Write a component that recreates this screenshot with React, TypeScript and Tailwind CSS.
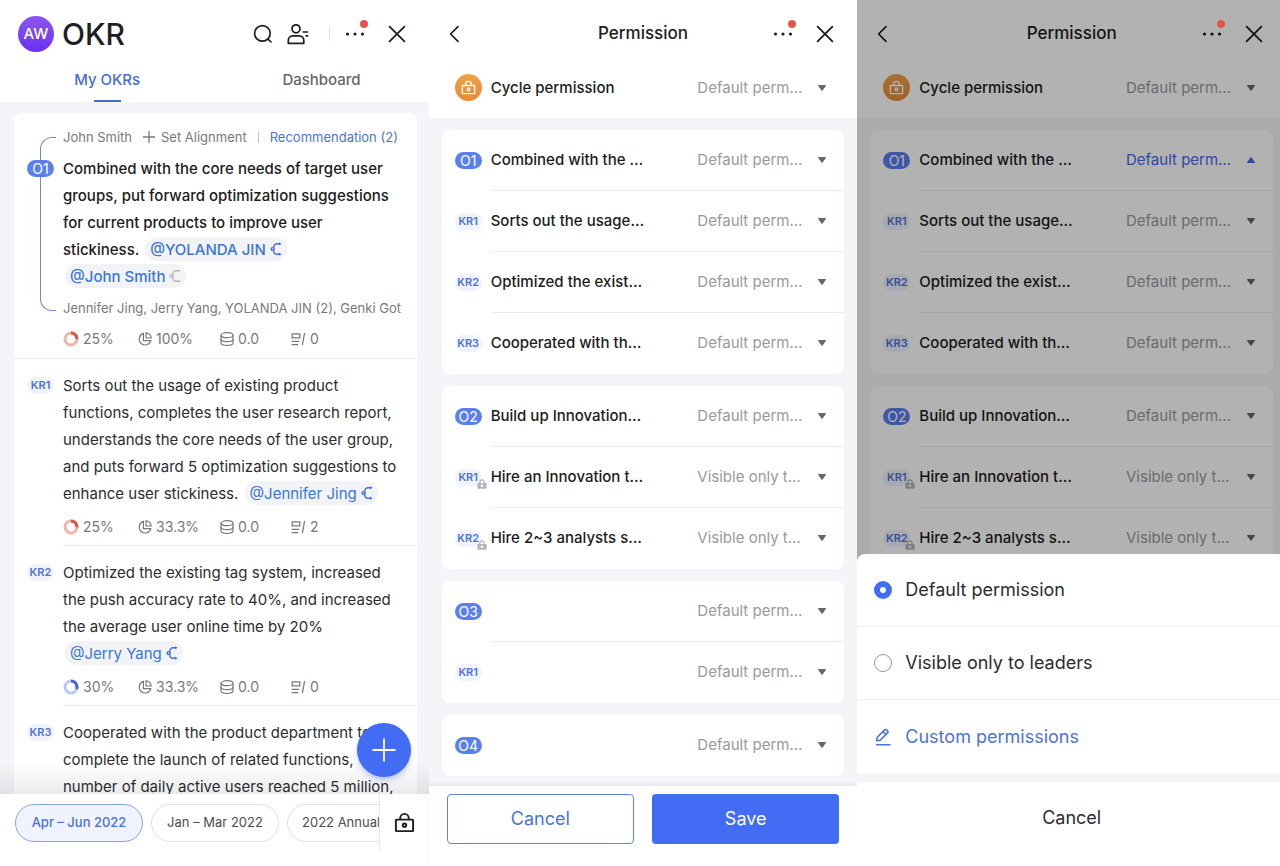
import { useState, type ReactNode } from "react";

type Progress = "red" | "blue";

function CloseIcon() {
  return (
    <svg width="20" height="20" viewBox="0 0 20 20" fill="none" stroke="currentColor" strokeWidth="1.8" strokeLinecap="round">
      <path d="M2.600 2.600l14.800 14.800M17.400 2.600L2.600 17.400" />
    </svg>
  );
}

function MoreIcon() {
  return (
    <svg width="20" height="6" viewBox="0 0 20 6" fill="currentColor">
      <circle cx="2.5" cy="3" r="1.6" />
      <circle cx="10" cy="3" r="1.6" />
      <circle cx="17.5" cy="3" r="1.6" />
    </svg>
  );
}

function SearchIcon() {
  return (
    <svg width="22" height="22" viewBox="0 0 22 22" fill="none" stroke="currentColor" strokeWidth="1.7" strokeLinecap="round">
      <circle cx="10.4" cy="10.4" r="7.8" />
      <path d="M16.2 16.4l2.800 2.600" />
    </svg>
  );
}

function ContactIcon() {
  return (
    <svg width="24" height="22" viewBox="0 0 24 22" fill="none" stroke="currentColor" strokeWidth="1.7">
      <circle cx="10" cy="5.800" r="4" />
      <path d="M2.300 20v-2.600a4.600 4.600 0 0 1 4.600-4.600h6.300a4.600 4.600 0 0 1 4.600 4.600V20a.4.4 0 0 1-.4.4H2.700a.4.4 0 0 1-.4-.4z" />
      <path d="M16.600 9h5.600M19.600 12.800h2.600" />
    </svg>
  );
}

function BackIcon() {
  return (
    <svg width="12" height="18" viewBox="0 0 12 18" fill="none" stroke="currentColor" strokeWidth="1.7" strokeLinecap="round" strokeLinejoin="round">
      <path d="M10 1.600L2.600 9l7.400 7.400" />
    </svg>
  );
}

function LockIcon({ size }: { size: number }) {
  return (
    <svg width={size} height={size} viewBox="0 0 22 22" fill="none" stroke="currentColor" strokeWidth="2">
      <rect x="2" y="8" width="18" height="12" rx="0.6" />
      <path d="M6.6 8V6.4a4.4 4.4 0 0 1 8.8 0V8" />
      <circle cx="11" cy="13.8" r="1.8" />
    </svg>
  );
}

function SmallLockIcon() {
  return (
    <svg width="10" height="10" viewBox="0 0 10 10">
      <path d="M2.9 4.4V3a2.1 2.1 0 0 1 4.2 0v1.4" fill="none" stroke="#b4b6ba" strokeWidth="1.2" />
      <rect x="0.4" y="3.9" width="9.2" height="5.8" rx="0.8" fill="#b4b6ba" />
      <circle cx="5" cy="6.8" r="1.2" fill="#fff" />
    </svg>
  );
}

function AlignIcon({ muted }: { muted?: boolean }) {
  return (
    <svg width="12" height="14" viewBox="0 0 12 14" fill="none" stroke={muted ? "#b9bcc2" : "#4a6fdc"} strokeWidth="1.4">
      <path d="M9.400 1.800H7a3.200 3.200 0 0 0-3.200 3.200v4A3.200 3.200 0 0 0 7 12.200h2.400" />
      <circle cx="2.500" cy="7" r="1.400" fill="#f2f3f5" />
      <path d="M9 .2l2.600 1.600L9 3.400zM9 10.600l2.600 1.600L9 13.800z" fill={muted ? "#b9bcc2" : "#4a6fdc"} stroke="none" />
    </svg>
  );
}

function RingIcon({ tone, percent }: { tone: Progress; percent: number }) {
  const length = 2 * Math.PI * 6;
  return (
    <svg width="16" height="16" viewBox="0 0 16 16" fill="none" strokeWidth="3">
      <circle cx="8" cy="8" r="6" stroke={tone === "red" ? "#f0b5ad" : "#b9c8fa"} />
      <circle
        cx="8"
        cy="8"
        r="6"
        stroke={tone === "red" ? "#d65648" : "#4463dc"}
        strokeDasharray={`${(length * percent) / 100} ${length}`}
        transform="rotate(-90 8 8)"
      />
    </svg>
  );
}

function PieIcon() {
  return (
    <svg width="14" height="14" viewBox="0 0 14 14" fill="none" stroke="currentColor" strokeWidth="1.2">
      <path d="M5.4 1.4A5.9 5.9 0 1 0 12.8 8.6H5.4z" />
      <path d="M8 .8v5.2h5.2A5.3 5.3 0 0 0 8 .8z" />
    </svg>
  );
}

function CoinsIcon() {
  return (
    <svg width="14" height="14" viewBox="0 0 14 14" fill="none" stroke="currentColor" strokeWidth="1.2">
      <ellipse cx="7" cy="3.2" rx="6" ry="2.5" />
      <path d="M1 3.2v7.5c0 1.4 2.7 2.6 6 2.6s6-1.2 6-2.6V3.2" />
      <path d="M1 7c0 1.4 2.7 2.6 6 2.6S13 8.400 13 7" />
    </svg>
  );
}

function NoteIcon() {
  return (
    <svg width="15" height="14" viewBox="0 0 15 14" fill="none" stroke="currentColor" strokeWidth="1.3">
      <path d="M1.2 1.800h7.600v4H1.200zM.6 9.300h7.600M.6 12.600h6.600M13.600 1l-2.200 12" />
    </svg>
  );
}

function EditIcon() {
  return (
    <svg width="18" height="18" viewBox="0 0 18 18" fill="none" stroke="currentColor" strokeWidth="1.6" strokeLinejoin="round">
      <path d="M2.600 12.800l.7-3.600L10.600 1.900a1.300 1.300 0 0 1 1.800 0l1.200 1.200a1.300 1.300 0 0 1 0 1.800L6.200 12.200z" />
      <path d="M9 3.600l2.900 2.900M2 16.700h14.500" />
    </svg>
  );
}

function MoreButton() {
  return (
    <button type="button" aria-label="More" className="relative flex h-8 w-8 items-center justify-center">
      <MoreIcon />
      <span className="absolute top-[2px] right-[3px] z-20 size-2 rounded-full bg-[#e15549]" />
    </button>
  );
}

function Badge({ label, locked }: { label: string; locked?: boolean }) {
  const objective = label.startsWith("O");
  return (
    <span className="relative flex w-[27px] shrink-0 items-center">
      {objective ? (
        <span className="flex h-[17px] w-full items-center justify-center rounded-full bg-[#5a7ff0] text-sm text-white">{label}</span>
      ) : (
        <span className="flex h-[17px] w-full items-center justify-center rounded-full bg-[#f0f3fd] text-[11px] font-semibold text-[#4d73d9]">{label}</span>
      )}
      {locked && (
        <span className="absolute -right-[5px] -bottom-[3px]">
          <SmallLockIcon />
        </span>
      )}
    </span>
  );
}

function Mention({ name, muted }: { name: string; muted?: boolean }) {
  return (
    <a href="#mention" className="mx-[2px] my-px inline-flex h-6 items-center gap-1 rounded-full bg-[#f2f3f5] px-[5px] align-top text-[#3b76d9]">
      @{name}
      <AlignIcon muted={muted} />
    </a>
  );
}

function Stats({ tone, percent, weight, score, notes }: { tone: Progress; percent: number; weight: string; score: string; notes: string }) {
  return (
    <div className="grid grid-cols-[75px_82px_71px_auto] text-sm leading-5 text-[#76797f]">
      <span className="flex items-center gap-1">
        <RingIcon tone={tone} percent={percent} />
        {percent}%
      </span>
      <span className="flex items-center gap-1">
        <PieIcon />
        {weight}
      </span>
      <span className="flex items-center gap-1">
        <CoinsIcon />
        {score}
      </span>
      <span className="flex items-center gap-1">
        <NoteIcon />
        {notes}
      </span>
    </div>
  );
}

function KeyResult({ label, children, stats }: { label: string; children: ReactNode; stats?: ReactNode }) {
  return (
    <li className="flex gap-[9px] pl-[13px]">
      <div className="flex h-[27px] items-center">
        <Badge label={label} />
      </div>
      <div className="min-w-0 flex-1 border-b border-[#eceded] pb-2">
        <p className="text-[15px] leading-[27px] whitespace-nowrap text-[#2b2d31]">{children}</p>
        {stats && <div className="pt-[10px]">{stats}</div>}
      </div>
    </li>
  );
}

function OkrPanel() {
  return (
    <section className="flex min-h-0 min-w-0 flex-col bg-white">
      <header className="flex h-[68px] shrink-0 items-center pr-[22px] pl-[18px]">
        <span className="flex size-9 items-center justify-center rounded-full bg-linear-to-b from-[#8b55ee] to-[#6c2ef0] text-[15px] font-medium text-white">AW</span>
        <h1 className="ml-2 flex-1 text-[30px] font-medium text-[#1f2024]">OKR</h1>
        <div className="flex items-center text-[#1d1e22]">
          <button type="button" aria-label="Search"><SearchIcon /></button>
          <button type="button" aria-label="Contacts" className="ml-3"><ContactIcon /></button>
          <span className="mr-[9px] ml-[19px] h-[14px] w-px bg-[#dfe0e2]" />
          <MoreButton />
          <button type="button" aria-label="Close" className="ml-4"><CloseIcon /></button>
        </div>
      </header>
      <nav className="grid h-[34px] shrink-0 grid-cols-2 text-[15px] font-medium">
        <a href="#okrs" aria-current="page" className="flex flex-col items-center justify-between text-[#456bd8]">
          <span className="leading-[23px]">My OKRs</span>
          <span className="h-[2px] w-[27px] bg-[#456bd8]" />
        </a>
        <a href="#dashboard" className="flex flex-col items-center text-[#65676c]">
          <span className="leading-[23px]">Dashboard</span>
        </a>
      </nav>

      <div className="relative min-h-0 flex-1">
        <main className="h-full overflow-hidden bg-[#f3f5f8] pt-[11px] pr-3 pl-[14px]">
          <div className="rounded-lg bg-white">
            <article className="relative border-b border-[#eceded] pt-[13px] pr-3 pb-[9px] pl-[13px]">
              <span className="absolute top-6 bottom-[47px] left-[26px] w-4 rounded-l-xl border-y border-l border-[#6a8bd8]" />
              <div className="flex items-center pl-9 text-[13px] leading-[22px] whitespace-nowrap text-[#76797f]">
                <span className="w-[67px]">John Smith</span>
                <button type="button" className="ml-[13px] flex items-center gap-[6px]">
                  <svg width="12" height="12" viewBox="0 0 12 12" stroke="currentColor" strokeWidth="1.300"><path d="M6 0v12M0 6h12" /></svg>
                  Set Alignment
                </button>
                <span className="mx-[11px] h-3 w-px bg-[#c5c7ca]" />
                <a href="#recommendation" className="text-[#4b74d8]">Recommendation (2)</a>
              </div>
              <div className="mt-[7px] flex gap-[9px]">
                <div className="flex h-[27px] items-center"><Badge label="O1" /></div>
                <div className="min-w-0 flex-1">
                  <h2 className="text-[15px] leading-[27px] font-medium whitespace-nowrap text-[#1b1c20]">
                    Combined with the core needs of target user<br />
                    groups, put forward optimization suggestions<br />
                    for current products to improve user<br />
                    stickiness. <Mention name="YOLANDA JIN" /><br />
                    <Mention name="John Smith" muted />
                  </h2>
                  <p className="mt-[7px] text-[13px] leading-[22px] whitespace-nowrap text-[#76797f]">Jennifer Jing, Jerry Yang, YOLANDA JIN (2), Genki Got</p>
                  <div className="mt-[10px]"><Stats tone="red" percent={25} weight="100%" score="0.0" notes="0" /></div>
                </div>
              </div>
            </article>
            <ul className="flex flex-col gap-[13px] pt-[13px]">
              <KeyResult label="KR1" stats={<Stats tone="red" percent={25} weight="33.3%" score="0.0" notes="2" />}>
                Sorts out the usage of existing product<br />
                functions, completes the user research report,<br />
                understands the core needs of the user group,<br />
                and puts forward 5 optimization suggestions to<br />
                enhance user stickiness. <Mention name="Jennifer Jing" />
              </KeyResult>
              <KeyResult label="KR2" stats={<Stats tone="blue" percent={30} weight="33.3%" score="0.0" notes="0" />}>
                Optimized the existing tag system, increased<br />
                the push accuracy rate to 40%, and increased<br />
                the average user online time by 20%<br />
                <Mention name="Jerry Yang" />
              </KeyResult>
              <KeyResult label="KR3">
                Cooperated with the product department to<br />
                complete the launch of related functions,<br />
                number of daily active users reached 5 million,
              </KeyResult>
            </ul>
          </div>
        </main>
        <div className="pointer-events-none absolute inset-x-0 bottom-0 h-8 bg-linear-to-t from-black/8 to-transparent" />
        <button type="button" aria-label="Add objective" className="absolute right-[18px] bottom-[17px] flex size-[54px] items-center justify-center rounded-full bg-[#436cf4] text-white shadow-md shadow-[#436cf4]/30">
          <svg width="24" height="24" viewBox="0 0 24 24" stroke="currentColor" strokeWidth="1.800"><path d="M12 .5v23M.5 12h23" /></svg>
        </button>
      </div>

      <footer className="flex h-[72px] shrink-0 items-start text-[13px] whitespace-nowrap">
        <div className="flex min-w-0 flex-1 gap-2 overflow-hidden pt-[10px] pl-[15px] text-[#4b4d52]">
          <button type="button" className="h-[38px] w-32 shrink-0 rounded-full border border-[#8ba4e0] bg-[#f0f3fe] font-medium text-[#4b71d9]">Apr – Jun 2022</button>
          <button type="button" className="h-[38px] w-32 shrink-0 rounded-full border border-[#dfe0e2]">Jan – Mar 2022</button>
          <button type="button" className="h-[38px] shrink-0 rounded-full border border-[#dfe0e2] px-[14px]">2022 Annual</button>
        </div>
        <button type="button" aria-label="Cycle permission" className="flex h-[57px] w-[50px] items-center justify-center border-l border-[#e8e9eb] text-[#1d1e22]">
          <LockIcon size={21} />
        </button>
      </footer>
    </section>
  );
}

type Entry = { label: string; title?: string; value: string; locked?: boolean };

const groups: Entry[][] = [
  [
    { label: "O1", title: "Combined with the …", value: "Default perm…" },
    { label: "KR1", title: "Sorts out the usage…", value: "Default perm…" },
    { label: "KR2", title: "Optimized the exist…", value: "Default perm…" },
    { label: "KR3", title: "Cooperated with th…", value: "Default perm…" },
  ],
  [
    { label: "O2", title: "Build up Innovation…", value: "Default perm…" },
    { label: "KR1", title: "Hire an Innovation t…", value: "Visible only t…", locked: true },
    { label: "KR2", title: "Hire 2~3 analysts s…", value: "Visible only t…", locked: true },
  ],
  [
    { label: "O3", value: "Default perm…" },
    { label: "KR1", value: "Default perm…" },
  ],
  [{ label: "O4", value: "Default perm…" }],
];

function PermissionSelect({ name, value, open }: { name: string; value: string; open?: boolean }) {
  return (
    <span className="relative flex w-[134px] shrink-0 items-center">
      <select
        aria-label={name}
        defaultValue={value}
        className={open ? "w-full appearance-none bg-transparent text-[15px] text-[#3f6bea]" : "w-full appearance-none bg-transparent text-[15px] text-[#989a9f]"}
      >
        <option>{value}</option>
      </select>
      <svg width="10" height="8" viewBox="0 0 10 8" className="pointer-events-none absolute right-1">
        {open ? (
          <path d="M5 1.500l3.600 5H1.400z" fill="#3f6bea" stroke="#3f6bea" strokeLinejoin="round" />
        ) : (
          <path d="M5 6.500l-3.600-5h7.200z" fill="#64676d" stroke="#64676d" strokeLinejoin="round" />
        )}
      </svg>
    </span>
  );
}

function PermissionPage({ selectedOpen }: { selectedOpen?: boolean }) {
  return (
    <>
      <header className="flex h-[68px] shrink-0 items-center justify-between pr-[22px] pl-[19px] text-[#1b1c20]">
        <button type="button" aria-label="Back" className="flex w-[71px]"><BackIcon /></button>
        <h1 className="text-[17px] font-medium">Permission</h1>
        <div className="flex items-center">
          <MoreButton />
          <button type="button" aria-label="Close" className="ml-4"><CloseIcon /></button>
        </div>
      </header>
      <div className="flex h-[50px] shrink-0 items-start pr-[26px] pl-[26px]">
        <span className="mt-[6px] flex size-[27px] shrink-0 items-center justify-center rounded-full bg-linear-to-b from-[#f0a24c] to-[#e88a30] text-white">
          <LockIcon size={15} />
        </span>
        <span className="ml-[9px] min-w-0 flex-1 text-[15px] leading-10 font-medium text-[#1b1c20]">Cycle permission</span>
        <span className="flex h-10 items-center"><PermissionSelect name="Cycle permission level" value="Default perm…" /></span>
      </div>
      <main className="flex min-h-0 flex-1 flex-col gap-3 overflow-hidden bg-[#f3f5f8] px-[13px] pt-3">
        {groups.map((group) => (
          <ul key={group[0].label} className="shrink-0 rounded-lg bg-white">
            {group.map((entry, index) => (
              <li key={entry.label} className="flex h-[61px] pl-[13px]">
                <span className="flex items-center"><Badge label={entry.label} locked={entry.locked} /></span>
                <span className={index < group.length - 1 ? "ml-[9px] flex min-w-0 flex-1 items-center border-b border-[#ececee] pr-[13px]" : "ml-[9px] flex min-w-0 flex-1 items-center border-b border-transparent pr-[13px]"}>
                  <span className="min-w-0 flex-1 text-[15px] font-medium whitespace-nowrap text-[#1b1c20]">{entry.title}</span>
                  <PermissionSelect name={`${entry.label} permission level`} value={entry.value} open={selectedOpen && entry.label === "O1"} />
                </span>
              </li>
            ))}
          </ul>
        ))}
      </main>
    </>
  );
}

function PermissionPanel() {
  return (
    <section className="flex min-h-0 min-w-0 flex-col bg-white">
      <PermissionPage />
      <footer className="z-10 grid h-20 shrink-0 grid-cols-2 items-start gap-[18px] bg-white px-[18px] pt-2 text-lg shadow-[0_-2px_3px_rgba(0,0,0,0.06)]">
        <button type="button" className="h-[50px] rounded border border-[#5f84d8] text-[#4b74d8]">Cancel</button>
        <button type="button" className="h-[50px] rounded bg-[#436cf4] text-white">Save</button>
      </footer>
    </section>
  );
}

function SheetPanel() {
  const [choice, setChoice] = useState("default");
  const radio =
    "size-[18px] shrink-0 appearance-none rounded-full border border-[#999ba0] bg-white checked:border-[6px] checked:border-[#436cf4]";
  return (
    <section className="relative flex min-h-0 min-w-0 flex-col overflow-hidden bg-white">
      <PermissionPage selectedOpen />
      <div className="absolute inset-0 z-10 bg-black/30" />
      <div role="dialog" aria-label="Permission" className="absolute inset-x-0 bottom-0 z-20 rounded-t-lg bg-white text-lg text-[#2a2c30]">
        <label className="flex h-[73px] items-center gap-[13px] border-b border-[#eff0f2] pl-[17px]">
          <input type="radio" name="permission" checked={choice === "default"} onChange={() => setChoice("default")} className={radio} />
          Default permission
        </label>
        <label className="flex h-[73px] items-center gap-[13px] border-b border-[#eff0f2] pl-[17px]">
          <input type="radio" name="permission" checked={choice === "leaders"} onChange={() => setChoice("leaders")} className={radio} />
          Visible only to leaders
        </label>
        <button type="button" className="flex h-[73px] w-full items-center gap-[13px] pl-[17px] text-[#4b74d8]">
          <EditIcon />
          Custom permissions
        </button>
        <div className="h-[9px] bg-[#f3f5f8]" />
        <button type="button" className="block h-[84px] w-full pb-3">Cancel</button>
      </div>
    </section>
  );
}

export default function App() {
  return (
    <div className="h-screen overflow-hidden bg-white font-[Inter,'Liberation_Sans',sans-serif]">
      <div className="grid h-full w-[calc(100%+6px)] grid-cols-3 grid-rows-1">
        <OkrPanel />
        <PermissionPanel />
        <SheetPanel />
      </div>
    </div>
  );
}
